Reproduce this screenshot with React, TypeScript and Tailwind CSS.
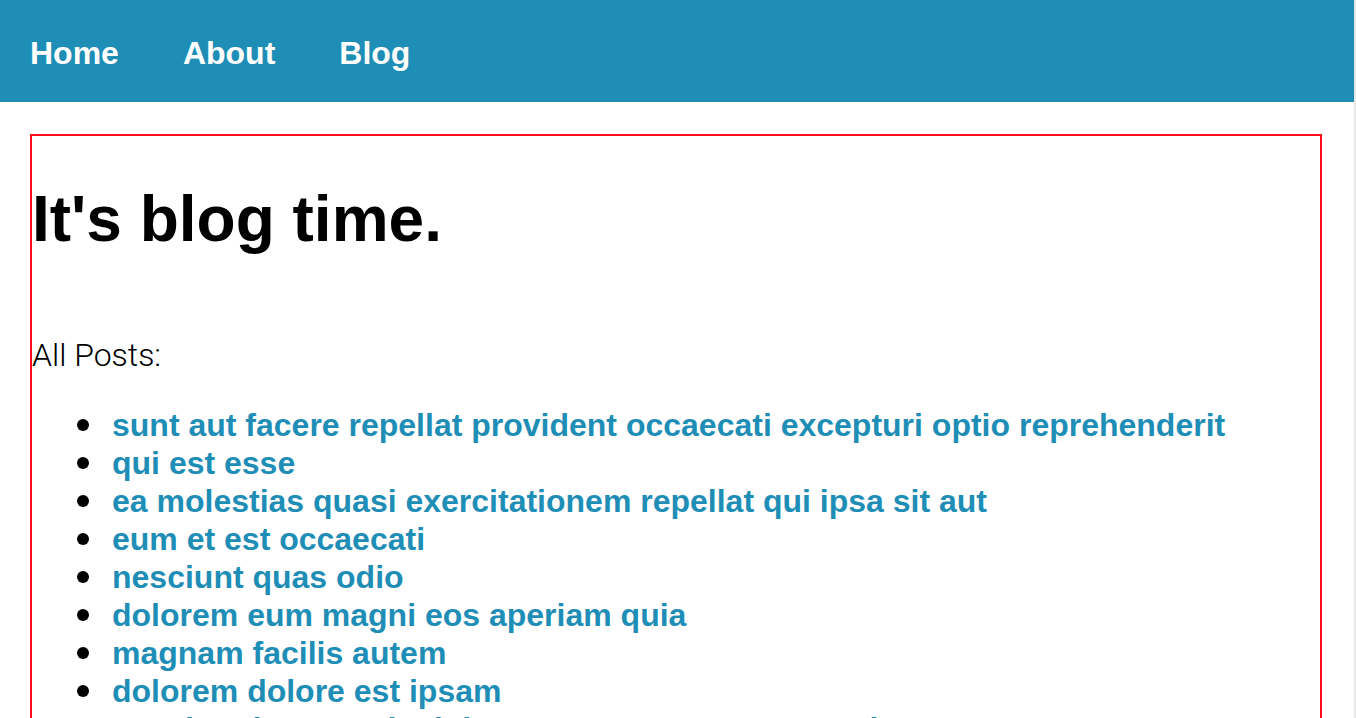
const links = ["Home", "About", "Blog"];

const posts = [
  "sunt aut facere repellat provident occaecati excepturi optio reprehenderit",
  "qui est esse",
  "ea molestias quasi exercitationem repellat qui ipsa sit aut",
  "eum et est occaecati",
  "nesciunt quas odio",
  "dolorem eum magni eos aperiam quia",
  "magnam facilis autem",
  "dolorem dolore est ipsam",
  "nesciunt iure omnis dolorem tempora et accusantium",
];

export default function App() {
  return (
    <div className="min-h-screen border-r-2 border-[#e8e8e8] bg-white font-['Liberation_Sans',Arial,sans-serif] text-[32px] leading-[38px] text-black">
      <nav className="flex gap-16 bg-[#1f8eb7] px-[30px] pt-[34px] pb-[30px] font-bold text-white">
        {links.map((label) => (
          <a key={label} href={`#${label.toLowerCase()}`}>
            {label}
          </a>
        ))}
      </nav>
      <main className="mt-8 mr-8 ml-[30px] border-2 border-[#fc0d1b] pt-[45px]">
        <h1 className="text-[64px] leading-[76px] font-bold">It's blog time.</h1>
        <p className="mt-[79px] font-['Roboto',sans-serif] font-light">All Posts:</p>
        <ul className="mt-8 pl-[45px]">
          {posts.map((title) => (
            <li
              key={title}
              className="flex items-center gap-[23px] before:size-3 before:shrink-0 before:rounded-full before:bg-black"
            >
              <a href="#post" className="font-bold text-[#1f8eb7]">
                {title}
              </a>
            </li>
          ))}
        </ul>
      </main>
    </div>
  );
}
